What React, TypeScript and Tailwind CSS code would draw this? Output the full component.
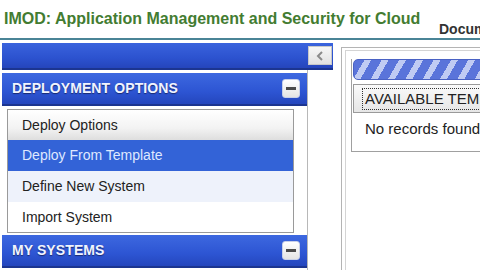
import React from "react";

function MinusBtn() {
  return (
    <div className="w-[18px] h-[19px] rounded-[3px] border border-[#c8d0e8] bg-[linear-gradient(#ffffff,#e4e4e4)] flex items-center justify-center shrink-0">
      <div className="w-[10px] h-[3px] bg-[#4a4a4a]" />
    </div>
  );
}

function SectionHeader({ title }: { title: string }) {
  return (
    <div className="h-[33px] flex items-center justify-between pl-[10px] pr-[7px] bg-[linear-gradient(#3d68e0,#2d55d3_60%,#2446bd)] border-b-[2px] border-[#1c3590] shrink-0">
      <span className="text-[14px] font-bold text-[#f0f4ff] tracking-[0.1px] [text-shadow:0_1px_1px_#1a2a70]">{title}</span>
      <MinusBtn />
    </div>
  );
}

export default function App() {
  return (
    <div className="w-[480px] h-[270px] overflow-hidden bg-white font-['Liberation_Sans',Arial,sans-serif]">
      {/* title row */}
      <div className="h-[38px] flex items-start">
        <div className="w-[435px] shrink-0 pl-[4px] pt-[9px] text-[16px] leading-[20px] font-bold text-[#437c31] whitespace-nowrap">
          IMOD: Application Management and Security for Cloud
        </div>
        <div className="shrink-0 pl-[4px] pt-[20px] text-[14px] leading-[18px] font-bold text-[#333] whitespace-nowrap">
          Documentation
        </div>
      </div>
      <div className="h-[2px] bg-[#4a8496]" />
      {/* body */}
      <div className="flex items-start pt-[3px]">
        {/* left */}
        <div className="w-[331px] ml-[2px] shrink-0 flex flex-col">
          <div className="h-[27px] flex items-center justify-end pr-[1px] bg-[linear-gradient(#3a63dd,#2c52cf_60%,#2545bb)] border-b-[2px] border-[#1c3590]">
            <div className="w-[24px] h-[19px] bg-[linear-gradient(#f6f6f6,#e2e2e2)] border border-[#c8c8c8] flex items-center justify-center">
              <svg width="10" height="12" viewBox="0 0 10 12">
                <path d="M7 2 L3 6 L7 10" fill="none" stroke="#8a8a8a" strokeWidth="2" />
              </svg>
            </div>
          </div>
          <div className="w-[306px] h-[205px] border-r border-[#b8b8b8] pt-[3px] flex flex-col">
            <SectionHeader title="DEPLOYMENT OPTIONS" />
            <div className="pl-[5px] pt-[3px] pb-[2px]">
              <div className="w-[287px] border border-[#9a9a9a] bg-white flex flex-col">
                <div className="h-[30px] flex items-center pl-[14px] text-[14px] text-[#222] bg-[linear-gradient(#ffffff,#f3f3f3_60%,#dedede)]">Deploy Options</div>
                <div className="h-[31px] flex items-center pl-[14px] text-[14px] text-[#dfe8ff] bg-[#3363d7]">Deploy From Template</div>
                <div className="h-[31px] flex items-center pl-[14px] text-[14px] text-[#222] bg-[#eef2fb]">Define New System</div>
                <div className="h-[30px] flex items-center pl-[14px] text-[14px] text-[#222] bg-white">Import System</div>
              </div>
            </div>
            <SectionHeader title="MY SYSTEMS" />
          </div>
        </div>
        {/* right */}
        <div className="ml-[8px] mt-[4px] flex-1 h-[230px] border-l border-t border-[#b4b4b4] pl-[3px] pt-[2px]">
          <div className="h-full border-l border-t border-[#d4d4d4] pl-[5px] pt-[4px]">
            <div className="border-l border-b border-[#a0a0a0] h-[93px] pl-[1px]">
              <div className="h-[21px] mt-[4px] rounded-l-[5px] border border-[#4a62c4] bg-[repeating-linear-gradient(120deg,#5a74da_0px,#5a74da_9px,#c0cbf3_9px,#c0cbf3_15px)]" />
              <div className="mt-[4px] h-[29px] border border-[#9a9a9a] bg-[linear-gradient(#fafafa,#e6e6e6)] flex items-center pl-[8px]">
                <span className="border border-dotted border-[#333] px-[2px] leading-[20px] text-[15px] text-[#222] whitespace-nowrap">AVAILABLE TEMPLATES</span>
              </div>
              <div className="h-[32px] flex items-center pl-[12px] text-[15px] text-[#222] whitespace-nowrap">No records found</div>
            </div>
          </div>
        </div>
      </div>
    </div>
  );
}
